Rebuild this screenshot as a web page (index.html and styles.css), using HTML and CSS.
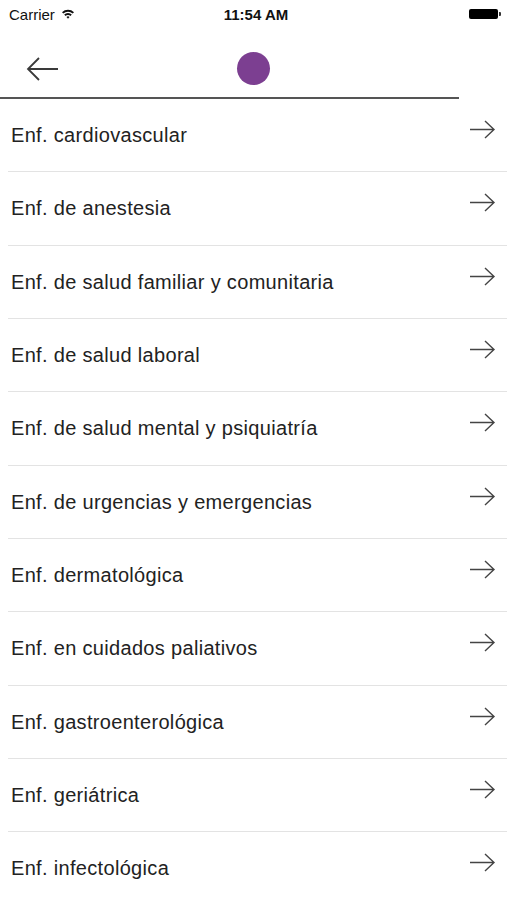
FILE: index.html
```html
<!DOCTYPE html>
<html lang="es">
<head>
    <meta charset="UTF-8">
    <meta name="viewport" content="width=device-width, initial-scale=1.0">
    <title>Especialidades</title>
    <link rel="stylesheet" href="styles.css">
</head>
<body>

<div class="status-bar">
    <div class="carrier">
        Carrier
        <svg class="wifi" width="14" height="12" viewBox="0 0 13 12">
            <path d="M0.5 4.2 A8.5 8.5 0 0 1 12.5 4.2 L11.2 5.6 A6.6 6.6 0 0 0 1.8 5.6 Z" fill="#111"/>
            <path d="M2.7 6.6 A5.3 5.3 0 0 1 10.3 6.6 L9 8 A3.4 3.4 0 0 0 4 8 Z" fill="#111"/>
            <path d="M5 9 A2.1 2.1 0 0 1 8 9 L6.5 10.8 Z" fill="#111"/>
        </svg>
    </div>
    <div class="time">11:54 AM</div>
    <div class="battery-wrap">
        <span class="battery"></span>
    </div>
</div>

<div class="nav">
    <button class="back" aria-label="Volver">
        <svg width="34" height="24" viewBox="0 0 34 24">
            <path d="M32 12 H2 M13 1 L2 12 L13 23" fill="none" stroke="#3a3a3a" stroke-width="1.8"/>
        </svg>
    </button>
    <span class="logo"></span>
    <span></span>
</div>
<div class="nav-rule"></div>

<ul class="lista" id="lista"></ul>

<script>
    const especialidades = [
        'Enf. cardiovascular',
        'Enf. de anestesia',
        'Enf. de salud familiar y comunitaria',
        'Enf. de salud laboral',
        'Enf. de salud mental y psiquiatría',
        'Enf. de urgencias y emergencias',
        'Enf. dermatológica',
        'Enf. en cuidados paliativos',
        'Enf. gastroenterológica',
        'Enf. geriátrica',
        'Enf. infectológica'
    ];

    const flecha = '<svg width="27" height="19" viewBox="0 0 27 19">' +
        '<path d="M1 9.5 H25 M16 1 L25 9.5 L16 18" fill="none" stroke="#444" stroke-width="1.4"/></svg>';

    let lista = document.getElementById('lista');
    especialidades.forEach(function (nombre) {
        let item = document.createElement('li');
        item.className = 'item';
        item.innerHTML = '<span class="nombre"></span><span class="flecha">' + flecha + '</span>';
        item.querySelector('.nombre').innerText = nombre;
        lista.appendChild(item);
    });
</script>

</body>
</html>
```

FILE: styles.css
```css
body {
    font-family: 'Liberation Sans', Arial, sans-serif;
    margin: 0;
    padding: 0;
    background-color: #fff;
    color: #222;
    overflow: hidden;
}

.status-bar {
    height: 28px;
    display: grid;
    grid-template-columns: 1fr auto 1fr;
    align-items: center;
    padding: 0 6px 0 9px;
    font-size: 15px;
    color: #111;
}

.carrier {
    display: flex;
    align-items: center;
    gap: 6px;
}

.wifi {
    margin-top: -1px;
}

.time {
    font-weight: bold;
    padding-left: 2px;
}

.battery-wrap {
    display: flex;
    justify-content: flex-end;
}

.battery {
    position: relative;
    width: 29px;
    height: 10px;
    background-color: #000;
    border-radius: 2px;
    margin-right: 3px;
}

.battery::after {
    content: '';
    position: absolute;
    right: -3px;
    top: 3px;
    width: 2px;
    height: 4px;
    background-color: #333;
    border-radius: 0 1px 1px 0;
}

.nav {
    height: 69px;
    box-sizing: border-box;
    padding-top: 12px;
    display: grid;
    grid-template-columns: 1fr auto 1fr;
    align-items: center;
}

.back {
    justify-self: start;
    background: none;
    border: none;
    padding: 0 0 0 26px;
    cursor: pointer;
    display: flex;
}

.logo {
    width: 33px;
    height: 33px;
    border-radius: 50%;
    background-color: #7c3f91;
}

.nav-rule {
    width: 459px;
    height: 2px;
    background-color: #555;
}

.lista {
    list-style: none;
    margin: 0 0 0 8px;
    padding: 0;
}

.item {
    height: 73.33px;
    box-sizing: border-box;
    display: flex;
    align-items: center;
    justify-content: space-between;
    padding: 0 11px 0 3px;
    border-bottom: 1px solid #e3e3e3;
}

.nombre {
    font-size: 20px;
    letter-spacing: 0.32px;
    color: #222;
    padding-top: 1px;
}

.flecha {
    align-self: flex-start;
    margin-top: 21px;
    display: flex;
}
```
